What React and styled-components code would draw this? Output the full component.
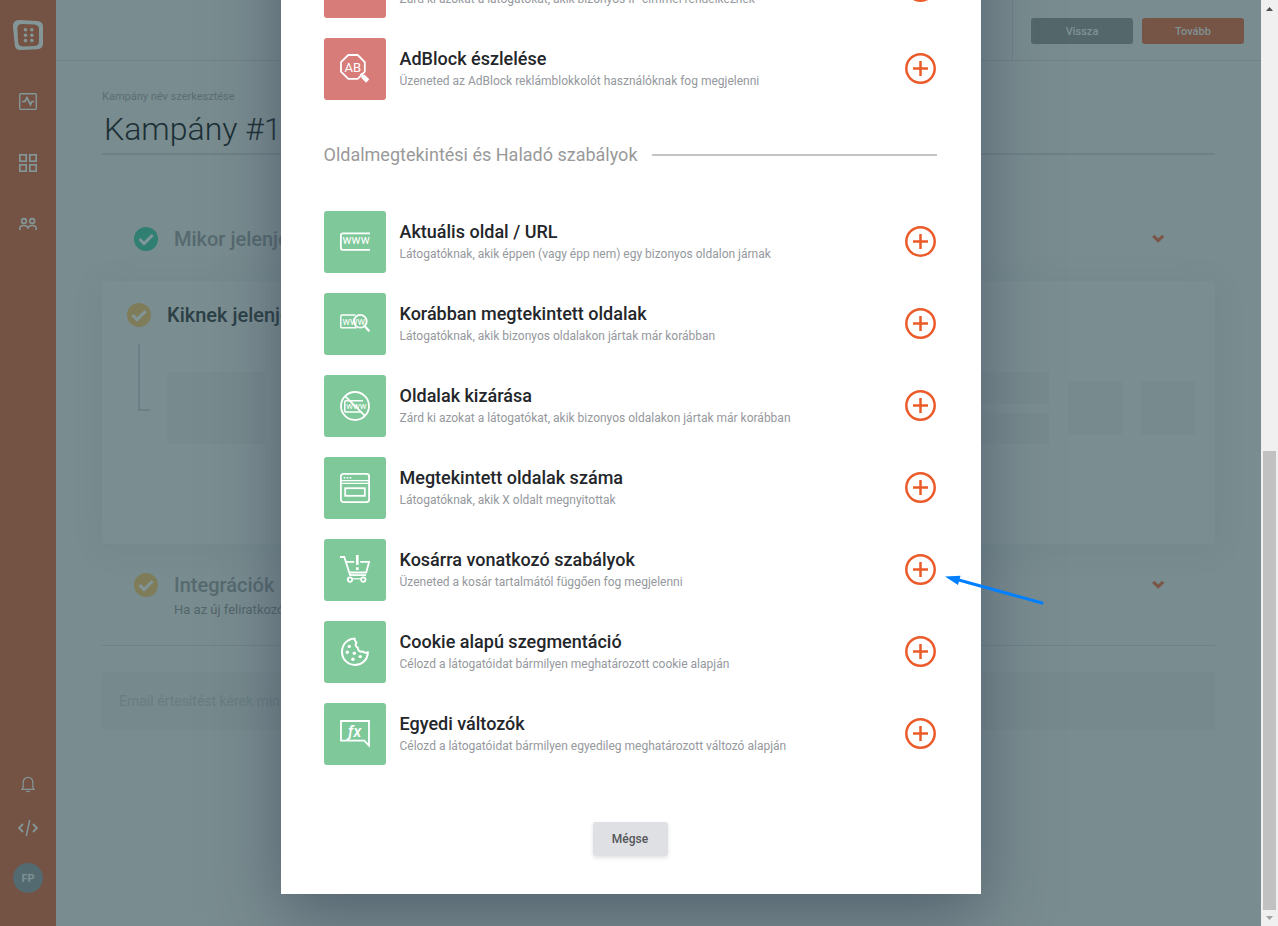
import { useState } from 'react'
import styled, { createGlobalStyle } from 'styled-components'

const GlobalStyle = createGlobalStyle`
  * {
    box-sizing: border-box;
  }
  body {
    margin: 0;
    font-family: Roboto, 'Liberation Sans', sans-serif;
    background: #798c8f;
  }
  button,
  input {
    font-family: inherit;
  }
`
const Window = styled.div`
  display: grid;
  grid-template-columns: minmax(0, 1fr) 17px;
  height: 100vh;
`
const Screen = styled.div`
  position: relative;
  display: grid;
  grid-template-columns: 56px minmax(0, 1fr);
  overflow: hidden;
`
const Sidebar = styled.nav`
  display: flex;
  flex-direction: column;
  align-items: center;
  padding: 20px 0 33px;
  color: #849798;
  background: #745345;
`
const SideGroup = styled.div`
  display: flex;
  flex-direction: column;
  align-items: center;
  gap: ${(props) => props.$gap};
`
const SideLink = styled.a`
  display: flex;
  color: inherit;
  text-decoration: none;
`
const Spacer = styled.div`
  flex: 1;
`
const Avatar = styled.a`
  display: grid;
  place-items: center;
  width: 30px;
  height: 30px;
  border-radius: 50%;
  color: #7c9094;
  background: #546a71;
  font-size: 11px;
  font-weight: 700;
  text-decoration: none;
`
const Header = styled.header`
  display: flex;
  justify-content: flex-end;
  height: 61px;
  border-bottom: 1px solid #6f8286;
`
const HeaderActions = styled.div`
  display: flex;
  gap: 9px;
  padding: 18px 17px 16px 18px;
  border-left: 1px solid #6f8286;
`
const HeaderButton = styled.button`
  width: 102px;
  height: 26px;
  padding: 0;
  border: 0;
  border-radius: 3px;
  color: #7f9294;
  background: ${(props) => (props.$primary ? '#765446' : '#54686b')};
  font-size: 11px;
  font-weight: 500;
`
const Content = styled.main`
  padding: 28px 46px;
`
const NameLabel = styled.label`
  display: block;
  color: #5b6e73;
  font-size: 11px;
  line-height: 16px;
`
const NameInput = styled.input`
  display: block;
  width: 100%;
  height: 50px;
  padding: 0 2px;
  border: 0;
  border-bottom: 2px solid #6e8186;
  color: #1c3036;
  background: transparent;
  font-size: 32px;
  font-weight: 300;
`
const Step = styled.section`
  display: grid;
  grid-template-columns: 24px minmax(0, 1fr) 14px;
  column-gap: 16px;
  row-gap: 3px;
  align-items: center;
  padding: 0 50px 0 32px;
  margin-top: ${(props) => props.$top};
`
const StepTitle = styled.h2`
  margin: 0;
  color: ${(props) => (props.$active ? '#2c4046' : '#566a6f')};
  font-size: 20px;
  font-weight: 500;
  line-height: 24px;
  white-space: nowrap;
`
const StepNote = styled.p`
  grid-column: 2;
  margin: 0;
  color: #52666b;
  font-size: 13px;
  line-height: 20px;
`
const Chevron = styled.button`
  display: flex;
  padding: 0;
  border: 0;
  color: #7b5546;
  background: none;
`
const Card = styled.section`
  margin-top: 30px;
  padding: 22px 20px 100px 25px;
  border-radius: 4px;
  background: #7a8d90;
  box-shadow: 0 4px 30px rgba(80, 110, 122, 0.14);
`
const CardHead = styled.div`
  display: flex;
  align-items: center;
  gap: 16px;
`
const CardBody = styled.div`
  display: flex;
  gap: 19px;
  margin: 17px 0 0 11px;
`
const Connector = styled.div`
  width: 12px;
  height: 67px;
  margin-right: -2px;
  border: solid #6b7f86;
  border-width: 0 0 2px 2px;
`
const Bars = styled.div`
  flex: 1;
  display: grid;
  gap: 9px;
  margin-top: 28px;
`
const Placeholder = styled.div`
  width: ${(props) => props.$width || 'auto'};
  height: ${(props) => props.$height};
  margin-top: ${(props) => props.$top || 0};
  border-radius: 3px;
  background: #778a8d;
`
const Divider = styled.hr`
  margin: 25px 0 26px;
  border: 0;
  border-top: 1px solid #6f8287;
`
const NotifyBox = styled.div`
  padding: 19px 17px;
  border-radius: 4px;
  color: #697d81;
  background: #76898c;
  font-size: 14px;
  line-height: 20px;
`
const Overlay = styled.div`
  position: absolute;
  inset: 0;
  display: flex;
  flex-direction: column;
  justify-content: flex-end;
  align-items: center;
  padding-bottom: 32px;
`
const Modal = styled.div`
  flex-shrink: 0;
  width: 700px;
  max-width: 100%;
  padding: 44px 44px 38px 43px;
  background: #fff;
  box-shadow: 0 19px 60px rgba(45, 56, 79, 0.5);
`
const RuleList = styled.ul`
  display: grid;
  gap: 20px;
  margin: 0;
  padding: 0;
  list-style: none;
`
const Rule = styled.li`
  position: relative;
  display: flex;
  align-items: center;
  gap: 14px;
`
const Tile = styled.div`
  display: grid;
  place-items: center;
  width: 62px;
  height: 62px;
  border-radius: 3px;
  background: ${(props) => (props.$red ? '#d87c7a' : '#7fc89a')};
`
const RuleText = styled.div`
  flex: 1;
`
const RuleTitle = styled.h3`
  margin: 0;
  color: #23262a;
  font-size: 18px;
  font-weight: 500;
  line-height: 24px;
`
const RuleNote = styled.p`
  margin: 0;
  color: #95989d;
  font-size: 12px;
  line-height: 20px;
`
const AddButton = styled.button`
  display: flex;
  padding: 0;
  border: 0;
  background: none;
  cursor: pointer;
`
const GroupTitle = styled.h2`
  display: flex;
  align-items: center;
  gap: 14px;
  margin: 43px 0 44px;
  color: #999;
  font-size: 18px;
  font-weight: 400;
  line-height: 24px;

  &::after {
    content: '';
    flex: 1;
    height: 2px;
    background: #c4c4c4;
  }
`
const ModalFooter = styled.div`
  display: flex;
  justify-content: center;
  margin-top: 57px;
`
const CancelButton = styled.button`
  width: 75px;
  height: 34px;
  padding: 0;
  border: 0;
  border-radius: 3px;
  color: #55565a;
  background: #dfe0e4;
  box-shadow: 0 2px 4px rgba(0, 0, 0, 0.12);
  font-size: 12px;
  font-weight: 500;
`
const Pointer = styled.svg`
  position: absolute;
  top: 31px;
  left: calc(100% + 8px);
  pointer-events: none;
`
const Scrollbar = styled.div`
  display: grid;
  grid-template-rows: 17px 434fr 459fr 16px;
  justify-items: center;
  align-items: center;
  background: #f0f0f0;
`
const Thumb = styled.div`
  grid-row: 3;
  width: 13px;
  height: 100%;
  background: #c1c1c1;
`
const DownArrow = styled.svg`
  grid-row: 4;
`

const IconSvg = ({ children }) => (
  <svg
    width='30'
    height='30'
    viewBox='0 0 30 30'
    fill='none'
    stroke='#fff'
    strokeWidth='1.8'
    aria-hidden='true'
  >
    {children}
  </svg>
)

const IconText = (props) => (
  <text fill='#fff' stroke='none' fontWeight='400' {...props} />
)

const icons = {
  ip: (
    <IconSvg>
      <circle cx='15' cy='12' r='10' />
    </IconSvg>
  ),
  adblock: (
    <IconSvg>
      <path d='M8.3 1h9.4l7.1 7.1v9.6l-7.1 7.1H8.3L1 17.7V8.1z' />
      <path d='M20.5 20l3 2.7' strokeWidth='2.5' />
      <path d='M22.7 22.2l5 4.8' strokeWidth='4.6' />
      <IconText x='4.6' y='17.5' fontSize='13'>
        AB
      </IconText>
    </IconSvg>
  ),
  url: (
    <IconSvg>
      <path d='M30 6.4H2.6A1.7 1.7 0 0 0 .9 8.1v13a1.7 1.7 0 0 0 1.7 1.7H30' />
      <IconText x='2.6' y='17.4' fontSize='12'>
        www
      </IconText>
    </IconSvg>
  ),
  visited: (
    <IconSvg>
      <path
        d='M15.5 6H2A1.2 1.2 0 0 0 .8 7.2v10.4A1.2 1.2 0 0 0 2 18.8h14.5'
        strokeWidth='1.4'
      />
      <circle cx='20.3' cy='12.3' r='6.4' />
      <path d='M24.7 17l4.6 5.3' strokeWidth='2.2' />
      <IconText x='2.4' y='15.5' fontSize='10'>
        www
      </IconText>
    </IconSvg>
  ),
  exclude: (
    <IconSvg>
      <circle cx='15' cy='15' r='14' />
      <path d='M23 9.7H5.8a1 1 0 0 0-1 1v9.2a1 1 0 0 0 1 1H22' strokeWidth='1.5' />
      <IconText x='6.3' y='18.3' fontSize='9'>
        www
      </IconText>
      <path d='M5 5.2L25 24.8' />
    </IconSvg>
  ),
  count: (
    <IconSvg>
      <rect x='.9' y='.9' width='28.2' height='28.2' rx='2.5' />
      <path d='M1 7.6h28M1 10.4h28' strokeWidth='1.2' />
      <path d='M3.7 4.7h1.6M6.7 4.7h1.6M9.7 4.7h1.6' strokeWidth='1.6' />
      <rect x='5.2' y='15.2' width='19.6' height='7.6' />
    </IconSvg>
  ),
  cart: (
    <IconSvg>
      <path d='M0 2h4.3l5.8 18.2h16' />
      <path d='M14.2 6.8H5.8M20.2 6.8h8.9l-2.9 10.7H9.2' />
      <circle cx='10' cy='24.6' r='2.2' />
      <circle cx='23.3' cy='24.6' r='2.2' />
      <path d='M17.3 0v9.7M17.3 12.2v2.7' strokeWidth='2.7' />
      <path d='M12 23.8h9' strokeWidth='1.2' />
    </IconSvg>
  ),
  cookie: (
    <IconSvg>
      <path
        d='M14.6 1.5C7 2 2 7.700 2 14.900a13 13 0 0 0 13 13c7.200 0 12.700-5.300 12.900-12.800-2 1-3.900.700-5.200-.7-2.500.900-5.300-1-4.800-3.700-2.400-.8-3-3.300-1.400-5-1.300-1.100-1.900-2.500-1.900-4.200z'
        strokeWidth='2'
        strokeLinejoin='round'
      />
      <g fill='#fff' stroke='none'>
        <circle cx='9.3' cy='9.4' r='1.7' />
        <circle cx='7.3' cy='15.2' r='1.7' />
        <circle cx='14.3' cy='16.3' r='1.7' />
        <circle cx='12.9' cy='22.2' r='1.7' />
        <circle cx='20.2' cy='19.6' r='1.7' />
      </g>
    </IconSvg>
  ),
  variable: (
    <IconSvg>
      <path d='M1 2h28v24.5L24.2 21.6H1z' />
      <IconText x='8' y='17.5' fontSize='16' fontStyle='italic' fontWeight='500'>
        ƒx
      </IconText>
    </IconSvg>
  ),
}

const visitorRules = [
  {
    icon: 'ip',
    title: 'IP cím kizárása',
    note: 'Zárd ki azokat a látogatókat, akik bizonyos IP címmel rendelkeznek',
  },
  {
    icon: 'adblock',
    title: 'AdBlock észlelése',
    note: 'Üzeneted az AdBlock reklámblokkolót használóknak fog megjelenni',
  },
]

const pageRules = [
  {
    icon: 'url',
    title: 'Aktuális oldal / URL',
    note: 'Látogatóknak, akik éppen (vagy épp nem) egy bizonyos oldalon járnak',
  },
  {
    icon: 'visited',
    title: 'Korábban megtekintett oldalak',
    note: 'Látogatóknak, akik bizonyos oldalakon jártak már korábban',
  },
  {
    icon: 'exclude',
    title: 'Oldalak kizárása',
    note: 'Zárd ki azokat a látogatókat, akik bizonyos oldalakon jártak már korábban',
  },
  {
    icon: 'count',
    title: 'Megtekintett oldalak száma',
    note: 'Látogatóknak, akik X oldalt megnyitottak',
  },
  {
    icon: 'cart',
    title: 'Kosárra vonatkozó szabályok',
    note: 'Üzeneted a kosár tartalmától függően fog megjelenni',
    pointed: true,
  },
  {
    icon: 'cookie',
    title: 'Cookie alapú szegmentáció',
    note: 'Célozd a látogatóidat bármilyen meghatározott cookie alapján',
  },
  {
    icon: 'variable',
    title: 'Egyedi változók',
    note: 'Célozd a látogatóidat bármilyen egyedileg meghatározott változó alapján',
  },
]

const Check = ({ color }) => (
  <svg width='24' height='24' viewBox='0 0 24 24' aria-hidden='true'>
    <circle cx='12' cy='12' r='12' fill={color} />
    <path d='M5.5 12l4.500 4.600 8.700-8.600' fill='none' stroke='#82969a' strokeWidth='3' />
  </svg>
)

const ChevronDown = ({ label }) => (
  <Chevron type='button' aria-label={label}>
    <svg width='14' height='14' viewBox='0 0 14 14'>
      <path d='M2.200 3.800l5 4.800 5-4.800' fill='none' stroke='currentColor' strokeWidth='3' />
    </svg>
  </Chevron>
)

const RuleRow = ({ rule, red }) => (
  <Rule>
    <Tile $red={red}>{icons[rule.icon]}</Tile>
    <RuleText>
      <RuleTitle>{rule.title}</RuleTitle>
      <RuleNote>{rule.note}</RuleNote>
    </RuleText>
    <AddButton type='button' aria-label={`${rule.title} hozzáadása`}>
      <svg width='32' height='32' viewBox='0 0 32 32' fill='none' stroke='#eb5a29'>
        <circle cx='15.500' cy='15.500' r='14.200' strokeWidth='2.500' />
        <path d='M8 15.500h15M15.500 8v15' strokeWidth='2.500' />
      </svg>
    </AddButton>
    {rule.pointed && (
      <Pointer width='102' height='38' viewBox='0 0 102 38'>
        <path d='M12 9.500L97 33' stroke='#0080ff' strokeWidth='3' strokeLinecap='round' />
        <path d='M0 6.500l15.500-.8L13 15z' fill='#0080ff' />
      </Pointer>
    )}
  </Rule>
)

function App() {
  const [name, setName] = useState('Kampány #1')
  const [open, setOpen] = useState(true)

  const handleNameChange = (e) => {
    setName(e.target.value)
  }

  return (
    <>
      <GlobalStyle />
      <Window>
        <Screen>
          <Sidebar>
            <SideGroup $gap='43px'>
              <SideLink href='#' aria-label='Kezdőlap'>
                <svg width='30' height='30' viewBox='0 0 30 30' fill='none'>
                  <path
                    fill='currentColor'
                    fillRule='evenodd'
                    d='M6 0l18 1c4 .2 6 2.200 6 6v16c0 4-2 6-6 6.300L8 30c-4 .200-6-1.600-6.300-5.500L0 7C-.2 2.500 2 .2 6 0zM9 4C6 4 4.300 5.500 4.400 8.500L5 21.500c.200 3.500 1.800 5 5 4.900l11.500-.4c3-.100 4.500-1.700 4.500-4.500V9.500c0-3-1.500-4.800-4.500-5z'
                  />
                  <g fill='currentColor'>
                    <circle cx='12.5' cy='9.8' r='1.8' />
                    <circle cx='18.8' cy='9.8' r='1.8' />
                    <circle cx='12.5' cy='15.2' r='1.8' />
                    <circle cx='18.8' cy='15.2' r='1.8' />
                    <circle cx='12.5' cy='20.6' r='1.8' />
                    <circle cx='18.8' cy='20.6' r='1.8' />
                  </g>
                </svg>
              </SideLink>
              <SideLink href='#' aria-label='Statisztika'>
                <svg width='18' height='18' viewBox='0 0 18 18' fill='none' stroke='currentColor'>
                  <rect x='.7' y='.7' width='16.6' height='15.7' rx='1' strokeWidth='1.4' />
                  <path d='M3 8.500h3l2-3.800 3.500 7L13 8.500h2.200' strokeWidth='1.700' />
                </svg>
              </SideLink>
              <SideLink href='#' aria-label='Kampányok'>
                <svg width='18' height='18' viewBox='0 0 18 18' fill='none' stroke='currentColor' strokeWidth='1.7'>
                  <rect x='.8' y='.8' width='6.4' height='6.4' />
                  <rect x='10.8' y='.8' width='6.4' height='6.4' />
                  <rect x='.8' y='10.8' width='6.4' height='6.4' />
                  <rect x='10.8' y='10.8' width='6.4' height='6.4' />
                </svg>
              </SideLink>
              <SideLink href='#' aria-label='Feliratkozók'>
                <svg width='18' height='18' viewBox='0 0 18 18' fill='none' stroke='currentColor' strokeWidth='1.6'>
                  <circle cx='5' cy='6' r='2.4' />
                  <circle cx='13.2' cy='6' r='2.4' />
                  <path d='M.8 15v-1.300c0-1.800 1.600-3.200 4-3.200s4.200 1.500 4.200 3.300c0-1.800 1.700-3.300 4.100-3.300s4.100 1.400 4.100 3.200V15' />
                </svg>
              </SideLink>
            </SideGroup>
            <Spacer />
            <SideGroup $gap='27px'>
              <SideLink href='#' aria-label='Értesítések'>
                <svg width='18' height='18' viewBox='0 0 18 18' fill='none' stroke='currentColor' strokeWidth='1.2'>
                  <path d='M4.200 12V7.500C4.200 4.500 6.200 2.300 9 2.300s4.800 2.200 4.800 5.200V12l1.200 2.300H3z' />
                  <path d='M7.200 16.500h3.600' />
                </svg>
              </SideLink>
              <SideLink href='#' aria-label='Beillesztő kód'>
                <svg width='20' height='16' viewBox='0 0 20 16' fill='none' stroke='currentColor'>
                  <path d='M5 4L1 8l4 4M15 4l4 4-4 4' strokeWidth='1.8' />
                  <path d='M11.7 0L8.3 16' strokeWidth='1.5' />
                </svg>
              </SideLink>
              <Avatar href='#'>FP</Avatar>
            </SideGroup>
          </Sidebar>
          <div>
            <Header>
              <HeaderActions>
                <HeaderButton type='button'>Vissza</HeaderButton>
                <HeaderButton type='button' $primary>
                  Tovább
                </HeaderButton>
              </HeaderActions>
            </Header>
            <Content>
              <NameLabel htmlFor='campaignName'>Kampány név szerkesztése</NameLabel>
              <NameInput
                id='campaignName'
                type='text'
                value={name}
                onChange={handleNameChange}
              />
              <Step $top='72px'>
                <Check color='#2f7f72' />
                <StepTitle>Mikor jelenjen</StepTitle>
                <ChevronDown label='Mikor jelenjen' />
              </Step>
              <Card>
                <CardHead>
                  <Check color='#7f7c5a' />
                  <StepTitle $active>Kiknek jelenjen</StepTitle>
                </CardHead>
                <CardBody>
                  <Connector />
                  <Placeholder $width='98px' $height='72px' $top='28px' />
                  <Bars>
                    <Placeholder $height='32px' />
                    <Placeholder $height='31px' />
                  </Bars>
                  <Placeholder $width='54px' $height='54px' $top='37px' />
                  <Placeholder $width='54px' $height='54px' $top='37px' />
                </CardBody>
              </Card>
              <Step $top='29px'>
                <Check color='#7f7c5a' />
                <StepTitle>Integrációk</StepTitle>
                <ChevronDown label='Integrációk' />
                <StepNote>Ha az új feliratkozókat</StepNote>
              </Step>
              <Divider />
              <NotifyBox>Email értesítést kérek minden</NotifyBox>
            </Content>
          </div>
          {open && (
            <Overlay>
              <Modal role='dialog' aria-modal='true' aria-label='Szabályok'>
                <RuleList>
                  {visitorRules.map((rule) => (
                    <RuleRow key={rule.icon} rule={rule} red />
                  ))}
                </RuleList>
                <GroupTitle>Oldalmegtekintési és Haladó szabályok</GroupTitle>
                <RuleList>
                  {pageRules.map((rule) => (
                    <RuleRow key={rule.icon} rule={rule} />
                  ))}
                </RuleList>
                <ModalFooter>
                  <CancelButton type='button' onClick={() => setOpen(false)}>
                    Mégse
                  </CancelButton>
                </ModalFooter>
              </Modal>
            </Overlay>
          )}
        </Screen>
        <Scrollbar aria-hidden='true'>
          <svg width='7' height='4' viewBox='0 0 7 4'>
            <path d='M0 4h7L3.5 0z' fill='#505050' />
          </svg>
          <Thumb />
          <DownArrow width='7' height='4' viewBox='0 0 7 4'>
            <path d='M0 0h7L3.5 4z' fill='#a3a3a3' />
          </DownArrow>
        </Scrollbar>
      </Window>
    </>
  )
}

export default App
